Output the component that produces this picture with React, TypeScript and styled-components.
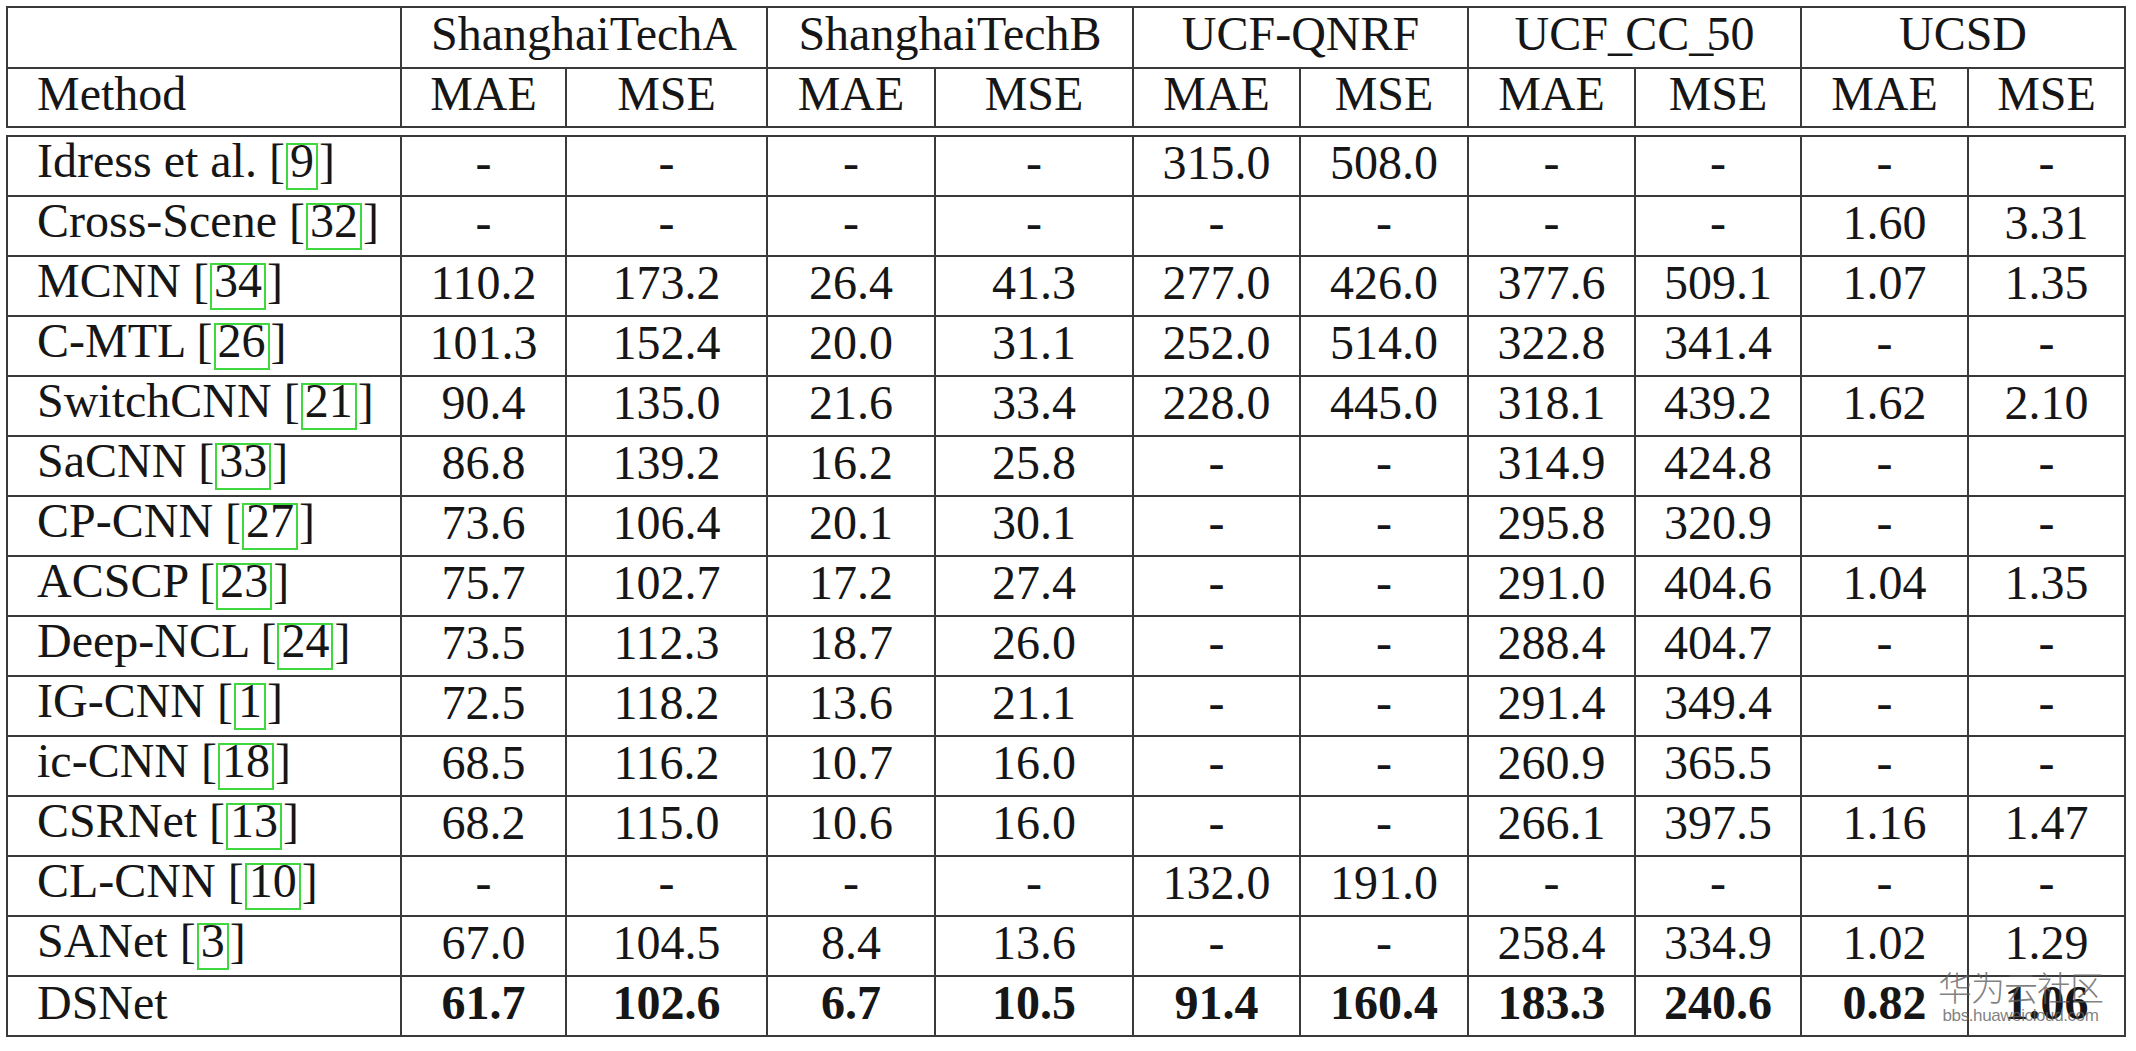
import React from "react";
import styled, { createGlobalStyle } from "styled-components";

const GlobalStyle = createGlobalStyle`
  html, body { margin: 0; padding: 0; background: #ffffff; }
  * { box-sizing: border-box; }
`;

const COLS = "394px 165px 201px 168px 198px 167px 168px 167px 166px 167px 157px";
const LINE = "2px solid #3a3a3a";

const Page = styled.div`
  position: relative;
  width: 2136px;
  height: 1051px;
  padding: 6px 0 0 6px;
  font-family: "Liberation Serif", "Times New Roman", serif;
  color: #161616;
  overflow: hidden;
`;

const Grid = styled.div<{ $rows: string; $gap?: number }>`
  display: grid;
  grid-template-columns: ${COLS};
  grid-template-rows: ${(p) => p.$rows};
  width: 2120px;
  border-left: ${LINE};
  border-top: ${LINE};
  margin-bottom: ${(p) => p.$gap ?? 0}px;
`;

const Cell = styled.div<{ $span?: number; $left?: boolean; $bold?: boolean }>`
  grid-column: span ${(p) => p.$span ?? 1};
  display: flex;
  align-items: center;
  justify-content: ${(p) => (p.$left ? "flex-start" : "center")};
  padding: 0 0 8px ${(p) => (p.$left ? "29px" : "0")};
  border-right: ${LINE};
  border-bottom: ${LINE};
  font-size: 48px;
  font-weight: ${(p) => (p.$bold ? 700 : 400)};
  white-space: nowrap;
`;

const Label = styled.span`
  display: block;
  line-height: 53px;
  white-space: nowrap;
`;

const Cite = styled.span`
  display: inline-block;
  line-height: 0.665em;
  padding: 0 2px 0.23em;
  border: 2px solid #3fd83f;
  margin: 0 1px;
`;

const Under = styled.span`
  letter-spacing: -0.14em;
`;

const Watermark = styled.div`
  position: absolute;
  left: 1938px;
  top: 967px;
  display: flex;
  flex-direction: column;
  align-items: center;
  color: rgba(95, 95, 95, 0.8);
  pointer-events: none;
`;

const WmTitle = styled.div`
  font-family: "Noto Sans CJK SC", sans-serif;
  font-weight: 300;
  font-size: 34px;
  line-height: 40px;
  letter-spacing: -1px;
`;

const WmUrl = styled.div`
  font-family: "Liberation Sans", Arial, sans-serif;
  font-size: 17px;
  line-height: 18px;
  letter-spacing: -0.4px;
`;

type Row = { name: string; cite?: string; vals: string[]; bold?: boolean };

const rows: Row[] = [
  { name: "Idress et al.", cite: "9", vals: ["-", "-", "-", "-", "315.0", "508.0", "-", "-", "-", "-"] },
  { name: "Cross-Scene", cite: "32", vals: ["-", "-", "-", "-", "-", "-", "-", "-", "1.60", "3.31"] },
  { name: "MCNN", cite: "34", vals: ["110.2", "173.2", "26.4", "41.3", "277.0", "426.0", "377.6", "509.1", "1.07", "1.35"] },
  { name: "C-MTL", cite: "26", vals: ["101.3", "152.4", "20.0", "31.1", "252.0", "514.0", "322.8", "341.4", "-", "-"] },
  { name: "SwitchCNN", cite: "21", vals: ["90.4", "135.0", "21.6", "33.4", "228.0", "445.0", "318.1", "439.2", "1.62", "2.10"] },
  { name: "SaCNN", cite: "33", vals: ["86.8", "139.2", "16.2", "25.8", "-", "-", "314.9", "424.8", "-", "-"] },
  { name: "CP-CNN", cite: "27", vals: ["73.6", "106.4", "20.1", "30.1", "-", "-", "295.8", "320.9", "-", "-"] },
  { name: "ACSCP", cite: "23", vals: ["75.7", "102.7", "17.2", "27.4", "-", "-", "291.0", "404.6", "1.04", "1.35"] },
  { name: "Deep-NCL", cite: "24", vals: ["73.5", "112.3", "18.7", "26.0", "-", "-", "288.4", "404.7", "-", "-"] },
  { name: "IG-CNN", cite: "1", vals: ["72.5", "118.2", "13.6", "21.1", "-", "-", "291.4", "349.4", "-", "-"] },
  { name: "ic-CNN", cite: "18", vals: ["68.5", "116.2", "10.7", "16.0", "-", "-", "260.9", "365.5", "-", "-"] },
  { name: "CSRNet", cite: "13", vals: ["68.2", "115.0", "10.6", "16.0", "-", "-", "266.1", "397.5", "1.16", "1.47"] },
  { name: "CL-CNN", cite: "10", vals: ["-", "-", "-", "-", "132.0", "191.0", "-", "-", "-", "-"] },
  { name: "SANet", cite: "3", vals: ["67.0", "104.5", "8.4", "13.6", "-", "-", "258.4", "334.9", "1.02", "1.29"] },
  { name: "DSNet", vals: ["61.7", "102.6", "6.7", "10.5", "91.4", "160.4", "183.3", "240.6", "0.82", "1.06"], bold: true },
];

const groups: React.ReactNode[] = [
  "ShanghaiTechA",
  "ShanghaiTechB",
  "UCF-QNRF",
  <>UCF<Under>_</Under>CC<Under>_</Under>50</>,
  "UCSD",
];

export default function App() {
  return (
    <Page>
      <GlobalStyle />
      <Grid $rows="61px 59px" $gap={7}>
        <Cell />
        {groups.map((g, i) => (
          <Cell key={i} $span={2}>
            <Label>{g}</Label>
          </Cell>
        ))}
        <Cell $left>
          <Label>Method</Label>
        </Cell>
        {groups.flatMap((_, i) => [
          <Cell key={`a${i}`}>
            <Label>MAE</Label>
          </Cell>,
          <Cell key={`s${i}`}>
            <Label>MSE</Label>
          </Cell>,
        ])}
      </Grid>
      <Grid $rows={`repeat(${rows.length}, 60px)`}>
        {rows.map((r) => (
          <React.Fragment key={r.name}>
            <Cell $left>
              <Label>
                {r.name}
                {r.cite && (
                  <>
                    {" "}[<Cite>{r.cite}</Cite>]
                  </>
                )}
              </Label>
            </Cell>
            {r.vals.map((v, j) => (
              <Cell key={j} $bold={r.bold}>
                <Label>{v}</Label>
              </Cell>
            ))}
          </React.Fragment>
        ))}
      </Grid>
      <Watermark>
        <WmTitle>华为云社区</WmTitle>
        <WmUrl>bbs.huaweicloud.com</WmUrl>
      </Watermark>
    </Page>
  );
}
